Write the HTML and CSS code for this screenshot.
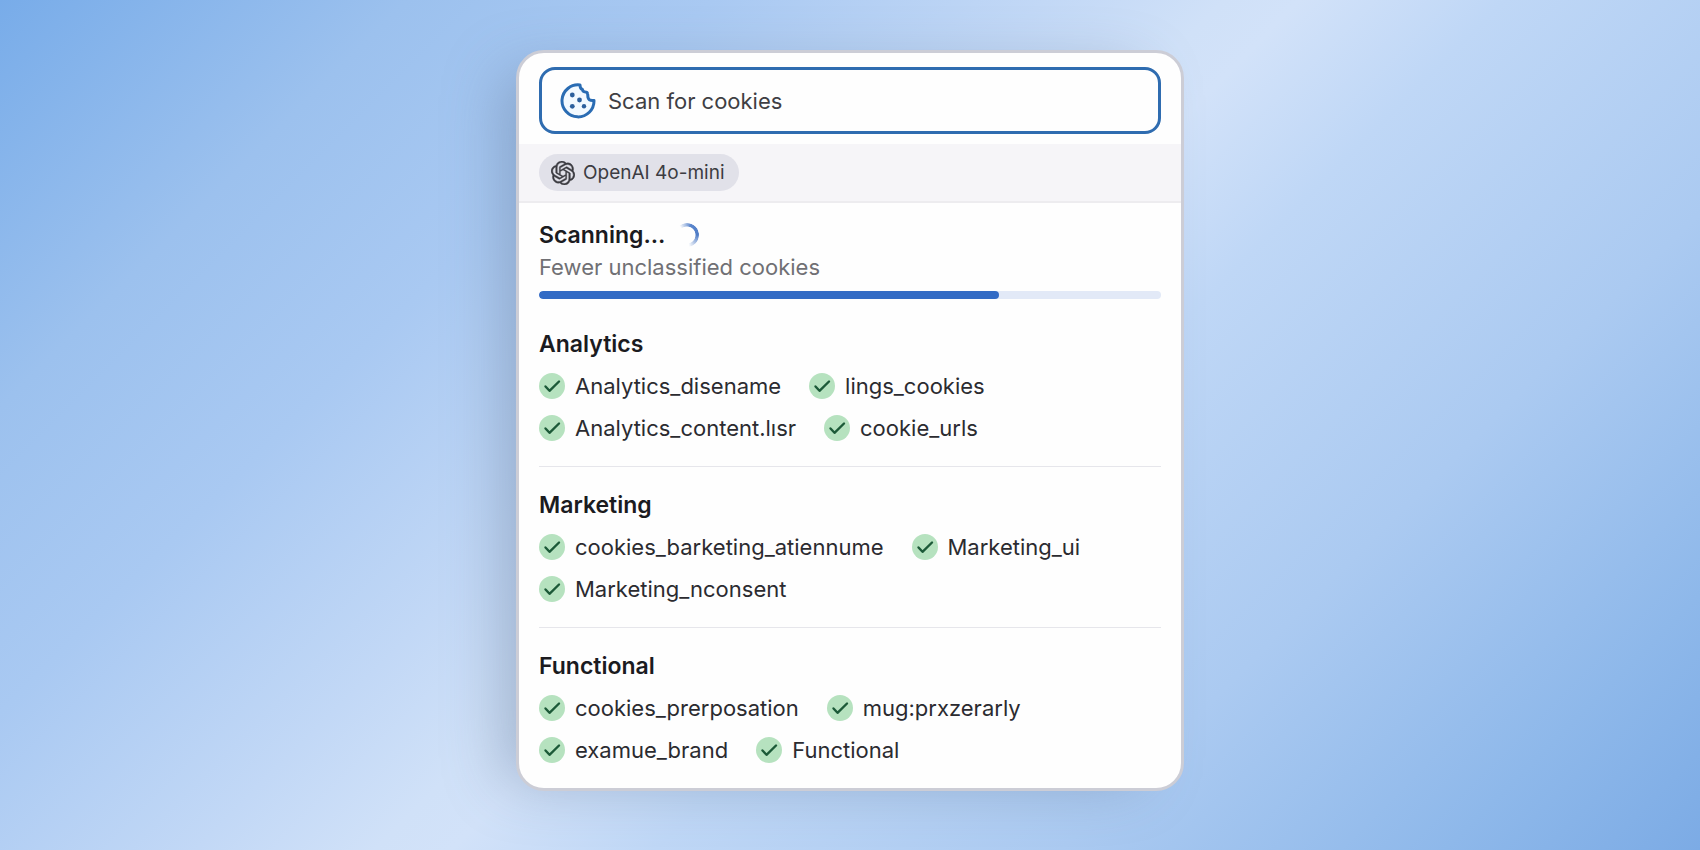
FILE: index.html
```html
<!DOCTYPE html>
<html lang="en">
<head>
    <meta charset="UTF-8">
    <meta name="viewport" content="width=device-width, initial-scale=1.0">
    <title>Scan for cookies</title>
    <link rel="stylesheet" href="styles.css">
</head>
<body>
    <!-- Shared icons -->
    <svg class="sprite" aria-hidden="true">
        <symbol id="check" viewBox="0 0 26 26">
            <circle cx="13" cy="13" r="13" fill="#b6e2bf"/>
            <path d="M6.5 13.5l4 4.300L20 8.500" fill="none" stroke="#1c5a38" stroke-width="2.400" stroke-linecap="round" stroke-linejoin="round"/>
        </symbol>
    </svg>

    <main class="card">
        <div class="search">
            <label class="search-box" for="scan">
                <svg class="cookie-icon" viewBox="0 0 36 36" aria-hidden="true">
                    <path d="M20 2A16 16 0 1 0 34 17.5C31 17.8 28.5 17 28 14.500C27.800 13.500 28 12.500 27.500 10.500C27.300 9.500 26.500 9 25.500 9C23 8.800 22.500 8 22.500 6.500C20.500 6 20 4.500 20 2Z" fill="#f2f9ff" stroke="#2a6cb3" stroke-width="3" stroke-linejoin="round"/>
                    <g fill="#2c5f9c">
                        <circle cx="12.300" cy="12" r="2.400"/>
                        <circle cx="19.500" cy="17" r="2.400"/>
                        <circle cx="12.300" cy="23.300" r="2.400"/>
                        <circle cx="24" cy="23.300" r="2.200"/>
                    </g>
                </svg>
                <input type="text" id="scan" placeholder="Scan for cookies" aria-label="Scan for cookies">
            </label>
        </div>

        <div class="toolbar">
            <button class="model" type="button">
                <svg class="model-icon" viewBox="0 0 24 24" aria-hidden="true">
                    <path fill="currentColor" stroke="currentColor" stroke-width=".4" d="M22.2819 9.8211a5.9847 5.9847 0 0 0-.5157-4.9108 6.0462 6.0462 0 0 0-6.5098-2.9A6.0651 6.0651 0 0 0 4.9807 4.1818a5.9847 5.9847 0 0 0-3.9977 2.9 6.0462 6.0462 0 0 0 .7427 7.0966 5.98 5.98 0 0 0 .511 4.9107 6.051 6.051 0 0 0 6.5146 2.9001A5.9847 5.9847 0 0 0 13.2599 24a6.0557 6.0557 0 0 0 5.7718-4.2058 5.9894 5.9894 0 0 0 3.9977-2.9001 6.0557 6.0557 0 0 0-.7475-7.0729zm-9.022 12.6081a4.4755 4.4755 0 0 1-2.8764-1.0408l.1419-.0804 4.7783-2.7582a.7948.7948 0 0 0 .3927-.6813v-6.7369l2.02 1.1686a.071.071 0 0 1 .038.052v5.5826a4.504 4.504 0 0 1-4.4945 4.4944zm-9.6607-4.1254a4.4708 4.4708 0 0 1-.5346-3.0137l.142.0852 4.783 2.7582a.7712.7712 0 0 0 .7806 0l5.8428-3.3685v2.3324a.0804.0804 0 0 1-.0332.0615L9.74 19.9502a4.4992 4.4992 0 0 1-6.1408-1.6464zM2.3408 7.8956a4.485 4.485 0 0 1 2.3655-1.9728V11.6a.7664.7664 0 0 0 .3879.6765l5.8144 3.3543-2.0201 1.1685a.0757.0757 0 0 1-.071 0l-4.8303-2.7865A4.504 4.504 0 0 1 2.3408 7.872zm16.5963 3.8558L13.1038 8.364 15.1192 7.2a.0757.0757 0 0 1 .071 0l4.8303 2.7913a4.4944 4.4944 0 0 1-.6765 8.1042v-5.6772a.79.79 0 0 0-.407-.667zm2.0107-3.0231l-.142-.0852-4.7735-2.7818a.7759.7759 0 0 0-.7854 0L9.409 9.2297V6.8974a.0662.0662 0 0 1 .0284-.0615l4.8303-2.7866a4.4992 4.4992 0 0 1 6.6802 4.66zM8.3065 12.863l-2.02-1.1638a.0804.0804 0 0 1-.038-.0567V6.0742a4.4992 4.4992 0 0 1 7.3757-3.4537l-.142.0805L8.704 5.459a.7948.7948 0 0 0-.3927.6813zm1.0976-2.3654l2.602-1.4998 2.6069 1.4998v2.9994l-2.5974 1.4997-2.6067-1.4997Z"/>
                </svg>
                OpenAI 4o-mini
            </button>
        </div>

        <div class="status">
            <h2>Scanning... <span class="spinner"></span></h2>
            <p>Fewer unclassified cookies</p>
            <div class="progress" role="progressbar" aria-label="Scan progress" aria-valuenow="74" aria-valuemin="0" aria-valuemax="100">
                <div class="progress-bar" style="width: 74%"></div>
            </div>
        </div>

        <section class="group">
            <h2>Analytics</h2>
            <ul>
                <li><svg class="check"><use href="#check"/></svg>Analytics_disename</li>
                <li><svg class="check"><use href="#check"/></svg>lings_cookies</li>
                <li><svg class="check"><use href="#check"/></svg>Analytics_content.lısr</li>
                <li><svg class="check"><use href="#check"/></svg>cookie_urls</li>
            </ul>
        </section>

        <section class="group">
            <h2>Marketing</h2>
            <ul>
                <li><svg class="check"><use href="#check"/></svg>cookies_barketing_atiennume</li>
                <li><svg class="check"><use href="#check"/></svg>Marketing_ui</li>
                <li><svg class="check"><use href="#check"/></svg>Marketing_nconsent</li>
            </ul>
        </section>

        <section class="group">
            <h2>Functional</h2>
            <ul>
                <li><svg class="check"><use href="#check"/></svg>cookies_prerposation</li>
                <li><svg class="check"><use href="#check"/></svg>mug:prxzerarly</li>
                <li><svg class="check"><use href="#check"/></svg>examue_brand</li>
                <li><svg class="check"><use href="#check"/></svg>Functional</li>
            </ul>
        </section>
    </main>
</body>
</html>
```
FILE: styles.css
```css
* {
    margin: 0;
    padding: 0;
    box-sizing: border-box;
}

body {
    font-family: Inter, 'Liberation Sans', sans-serif;
    font-size: 22px;
    line-height: 28px;
    color: #2b2b30;
    min-height: 100vh;
    padding: 50px 20px;
    background: linear-gradient(135deg, #78ace9 0%, #9cc1ee 16%, #a9c9f2 28%, #c2d8f6 41%, #d0e1f8 48%, #d2e2f9 51%, #bfd7f6 59%, #abcaf1 75%, #8eb8ea 90%, #7cabe5 100%);
}

.sprite {
    display: none;
}

.card {
    max-width: 668px;
    margin: 0 auto;
    background: #fefefe;
    border: 3px solid #cccdd6;
    border-radius: 28px;
    overflow: hidden;
    box-shadow: -28px 6px 60px -16px rgba(85, 108, 140, 0.4);
}

.search {
    padding: 14px 20px 10px;
}

.search-box {
    display: flex;
    align-items: center;
    gap: 12px;
    height: 67px;
    padding: 0 18px;
    border: 3px solid #2f6cb0;
    border-radius: 16px;
}

.cookie-icon {
    width: 36px;
    height: 36px;
    flex-shrink: 0;
}

.search-box input {
    flex: 1;
    min-width: 0;
    border: none;
    outline: none;
    background: none;
    font: inherit;
    color: #3f3f44;
}

.search-box input::placeholder {
    color: #3f3f44;
    opacity: 1;
}

.toolbar {
    padding: 10px 20px;
    background: #f6f5f8;
    border-bottom: 2px solid #edecef;
}

.model {
    display: flex;
    align-items: center;
    gap: 8px;
    height: 37px;
    padding: 0 14px 0 12px;
    border: none;
    border-radius: 20px;
    background: #e1e1e9;
    font: inherit;
    font-size: 19px;
    color: #3c3c42;
}

.model-icon {
    width: 24px;
    height: 24px;
}

h2 {
    font-size: 23px;
    font-weight: 600;
    color: #1b1b1f;
}

.status {
    padding: 16px 20px 7px;
    line-height: 32px;
}

.status h2 {
    display: flex;
    align-items: center;
    gap: 10px;
}

.status p {
    color: #707074;
}

.spinner {
    width: 24px;
    height: 24px;
    border-radius: 50%;
    background: conic-gradient(from -40deg, rgba(58, 108, 196, 0), #5b86cc 60deg, #4f7cc6 130deg, rgba(58, 108, 196, 0) 210deg);
    mask: radial-gradient(closest-side, transparent 68%, #000 74%);
}

.progress {
    height: 8px;
    margin-top: 8px;
    border-radius: 4px;
    background: #e2e9f7;
    overflow: hidden;
}

.progress-bar {
    height: 100%;
    border-radius: 4px;
    background: #326bc5;
}

.group {
    margin: 0 20px;
    padding: 24px 0;
}

.group + .group {
    border-top: 1px solid #e6e6eb;
}

.group h2 {
    margin-bottom: 14px;
}

.group ul {
    display: flex;
    flex-wrap: wrap;
    gap: 14px 28px;
    list-style: none;
}

.group li {
    display: flex;
    align-items: center;
    gap: 10px;
}

.check {
    width: 26px;
    height: 26px;
    flex-shrink: 0;
}
```
